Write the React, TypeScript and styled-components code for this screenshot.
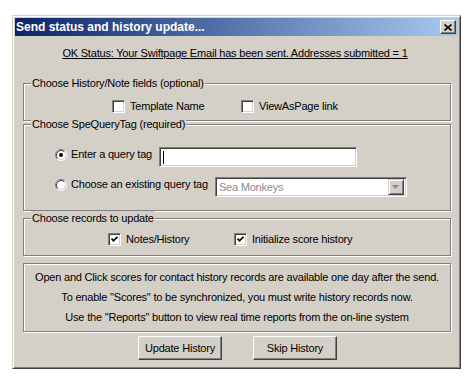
import * as React from 'react';
import styled, { createGlobalStyle } from 'styled-components';

const Colors = {
  face: '#D4D0C8',
  shadow: '#808080',
  darkShadow: '#404040',
  light: '#FFFFFF',
  text: '#000000',
  disabled: '#8C8C8C',
};

const GlobalStyle = createGlobalStyle`
  html, body {
    margin: 0;
    padding: 0;
    background: #fff;
  }
  body {
    font-family: "Liberation Sans", Arial, sans-serif;
    font-size: 11px;
    letter-spacing: -0.2px;
    color: ${Colors.text};
  }
`;

const App = () => {
  return (
    <>
      <GlobalStyle />
      <Window>
        <TitleBar>
          <Title>Send status and history update...</Title>
          <CloseButton>
            <svg width="8" height="7" viewBox="0 0 8 7">
              <path d="M0.5 0.5 L7.5 6.5 M7.5 0.5 L0.5 6.5" stroke="#000" strokeWidth="1.6" />
            </svg>
          </CloseButton>
        </TitleBar>
        <Client>
          <Status>OK Status: Your Swiftpage Email has been sent. Addresses submitted = 1</Status>

          <GroupBox $top={23} $height={38} $padTop={16} $padLeft={88}>
            <Legend>Choose History/Note fields (optional)</Legend>
            <CheckRow>
              <CheckItem $width={129}>
                <CheckBox />
                <span>Template Name</span>
              </CheckItem>
              <CheckItem>
                <CheckBox />
                <span>ViewAsPage link</span>
              </CheckItem>
            </CheckRow>
          </GroupBox>

          <GroupBox $top={3} $height={87} $padTop={22} $padLeft={31}>
            <Legend>Choose SpeQueryTag (required)</Legend>
            <RadioRow>
              <Radio checked />
              <RadioLabel>Enter a query tag</RadioLabel>
              <TextInput>
                <Caret />
              </TextInput>
            </RadioRow>
            <RadioRow $gap={10}>
              <Radio />
              <RadioLabel>Choose an existing query tag</RadioLabel>
              <Combo>
                <ComboText>Sea Monkeys</ComboText>
                <ComboButton>
                  <svg width="7" height="4" viewBox="0 0 7 4">
                    <path d="M0 0 H7 L3.5 4 Z" fill="#8C8C8C" />
                  </svg>
                </ComboButton>
              </Combo>
            </RadioRow>
          </GroupBox>

          <GroupBox $top={7} $height={38} $padTop={14} $padLeft={84}>
            <Legend>Choose records to update</Legend>
            <CheckRow>
              <CheckItem $width={126}>
                <CheckBox checked />
                <span>Notes/History</span>
              </CheckItem>
              <CheckItem>
                <CheckBox checked />
                <span>Initialize score history</span>
              </CheckItem>
            </CheckRow>
          </GroupBox>

          <GroupBox $top={7} $height={69} $padTop={3} $padLeft={0}>
            <InfoLine>Open and Click scores for contact history records are available one day after the send.</InfoLine>
            <InfoLine>To enable "Scores" to be synchronized, you must write history records now.</InfoLine>
            <InfoLine>Use the "Reports" button to view real time reports from the on-line system</InfoLine>
          </GroupBox>

          <ButtonRow>
            <Button>Update History</Button>
            <Button>Skip History</Button>
          </ButtonRow>
        </Client>
      </Window>
    </>
  );
};

const CheckBox = ({ checked }: { checked?: boolean }) => (
  <CheckFrame>
    {checked && (
      <svg width="7" height="7" viewBox="0 0 7 7">
        <path d="M0.5 2.5 L2.5 4.8 L6.5 0.8" stroke="#000" strokeWidth="1.8" fill="none" />
      </svg>
    )}
  </CheckFrame>
);

const Radio = ({ checked }: { checked?: boolean }) => (
  <RadioIcon width="12" height="12" viewBox="0 0 12 12">
    <circle cx="6" cy="6" r="5" fill="#fff" />
    <path d="M2.11 9.89 A5.5 5.5 0 0 1 9.89 2.11" stroke={Colors.shadow} fill="none" />
    <path d="M9.89 2.11 A5.5 5.5 0 0 1 2.11 9.89" stroke={Colors.light} fill="none" />
    <path d="M2.82 9.18 A4.5 4.5 0 0 1 9.18 2.82" stroke={Colors.darkShadow} fill="none" />
    <path d="M9.18 2.82 A4.5 4.5 0 0 1 2.82 9.18" stroke={Colors.face} fill="none" />
    {checked && <circle cx="6" cy="6" r="2" fill="#000" />}
  </RadioIcon>
);

const Window = styled.div`
  box-sizing: border-box;
  margin: 15px 0 0 12px;
  width: 449px;
  height: 354px;
  padding: 2px;
  background: ${Colors.face};
  border: 1px solid;
  border-color: ${Colors.face} ${Colors.darkShadow} ${Colors.darkShadow} ${Colors.face};
  box-shadow: inset 1px 1px 0 ${Colors.light}, inset -1px -1px 0 ${Colors.shadow};
  display: flex;
  flex-direction: column;
`;

const TitleBar = styled.div`
  height: 18px;
  display: flex;
  align-items: center;
  justify-content: space-between;
  padding: 0 2px 0 1px;
  background: linear-gradient(to right, #0a246a, #a6caf0);
`;

const Title = styled.div`
  color: #fff;
  font-weight: bold;
  font-size: 12px;
  letter-spacing: 0;
`;

const CloseButton = styled.div`
  box-sizing: border-box;
  width: 16px;
  height: 14px;
  display: flex;
  align-items: center;
  justify-content: center;
  background: ${Colors.face};
  border: 1px solid;
  border-color: ${Colors.light} ${Colors.darkShadow} ${Colors.darkShadow} ${Colors.light};
  box-shadow: inset -1px -1px 0 ${Colors.shadow};
`;

const Client = styled.div`
  display: flex;
  flex-direction: column;
  padding: 0 7px 0 8px;
`;

const Status = styled.div`
  margin-top: 10px;
  line-height: 14px;
  text-align: center;
  text-decoration: underline;
  padding-right: 4px;
`;

const GroupBox = styled.div<{ $top: number; $height: number; $padTop: number; $padLeft: number }>`
  position: relative;
  box-sizing: border-box;
  margin-top: ${(p) => p.$top}px;
  height: ${(p) => p.$height}px;
  padding: ${(p) => p.$padTop}px 0 0 ${(p) => p.$padLeft}px;
  border: 1px solid ${Colors.shadow};
  box-shadow: 1px 1px 0 ${Colors.light}, inset 1px 1px 0 ${Colors.light};
  display: flex;
  flex-direction: column;
`;

const Legend = styled.span`
  position: absolute;
  top: -8px;
  left: 7px;
  padding: 0 1px;
  line-height: 14px;
  background: ${Colors.face};
`;

const CheckRow = styled.div`
  display: flex;
  align-items: center;
  height: 13px;
`;

const CheckItem = styled.div<{ $width?: number }>`
  display: flex;
  align-items: center;
  gap: 5px;
  width: ${(p) => (p.$width ? `${p.$width}px` : 'auto')};
  line-height: 13px;
`;

const CheckFrame = styled.div`
  box-sizing: border-box;
  width: 13px;
  height: 13px;
  flex: none;
  display: flex;
  align-items: center;
  justify-content: center;
  background: #fff;
  border: 1px solid;
  border-color: ${Colors.shadow} ${Colors.light} ${Colors.light} ${Colors.shadow};
  box-shadow: inset 1px 1px 0 ${Colors.darkShadow}, inset -1px -1px 0 ${Colors.face};
`;

const RadioRow = styled.div<{ $gap?: number }>`
  display: flex;
  align-items: flex-start;
  height: 20px;
  margin-top: ${(p) => p.$gap ?? 0}px;
`;

const RadioIcon = styled.svg`
  flex: none;
  margin-top: 2px;
`;

const RadioLabel = styled.span`
  margin-left: 4px;
  margin-right: 7px;
  line-height: 15px;
`;

const TextInput = styled.div`
  box-sizing: border-box;
  width: 198px;
  height: 20px;
  display: flex;
  align-items: center;
  padding-left: 3px;
  background: #fff;
  border: 1px solid;
  border-color: ${Colors.shadow} ${Colors.light} ${Colors.light} ${Colors.shadow};
  box-shadow: inset 1px 1px 0 ${Colors.darkShadow}, inset -1px -1px 0 ${Colors.face};
`;

const Caret = styled.span`
  width: 1px;
  height: 13px;
  background: #000;
`;

const Combo = styled(TextInput)`
  width: 192px;
  padding: 2px;
  justify-content: space-between;
`;

const ComboText = styled.span`
  color: ${Colors.disabled};
  padding-left: 1px;
`;

const ComboButton = styled.div`
  box-sizing: border-box;
  width: 16px;
  height: 16px;
  display: flex;
  align-items: center;
  justify-content: center;
  background: ${Colors.face};
  border: 1px solid;
  border-color: ${Colors.face} ${Colors.darkShadow} ${Colors.darkShadow} ${Colors.face};
  box-shadow: inset 1px 1px 0 ${Colors.light}, inset -1px -1px 0 ${Colors.shadow};
`;

const InfoLine = styled.div`
  line-height: 20px;
  text-align: center;
`;

const ButtonRow = styled.div`
  display: flex;
  gap: 31px;
  margin-top: 4px;
  padding-left: 115px;
`;

const Button = styled.button`
  box-sizing: border-box;
  width: 84px;
  height: 24px;
  padding: 0;
  font-family: inherit;
  font-size: 11px;
  letter-spacing: -0.2px;
  color: ${Colors.text};
  background: ${Colors.face};
  border: 1px solid;
  border-color: ${Colors.light} ${Colors.darkShadow} ${Colors.darkShadow} ${Colors.light};
  box-shadow: inset -1px -1px 0 ${Colors.shadow};
  border-radius: 0;
`;

export default App;
